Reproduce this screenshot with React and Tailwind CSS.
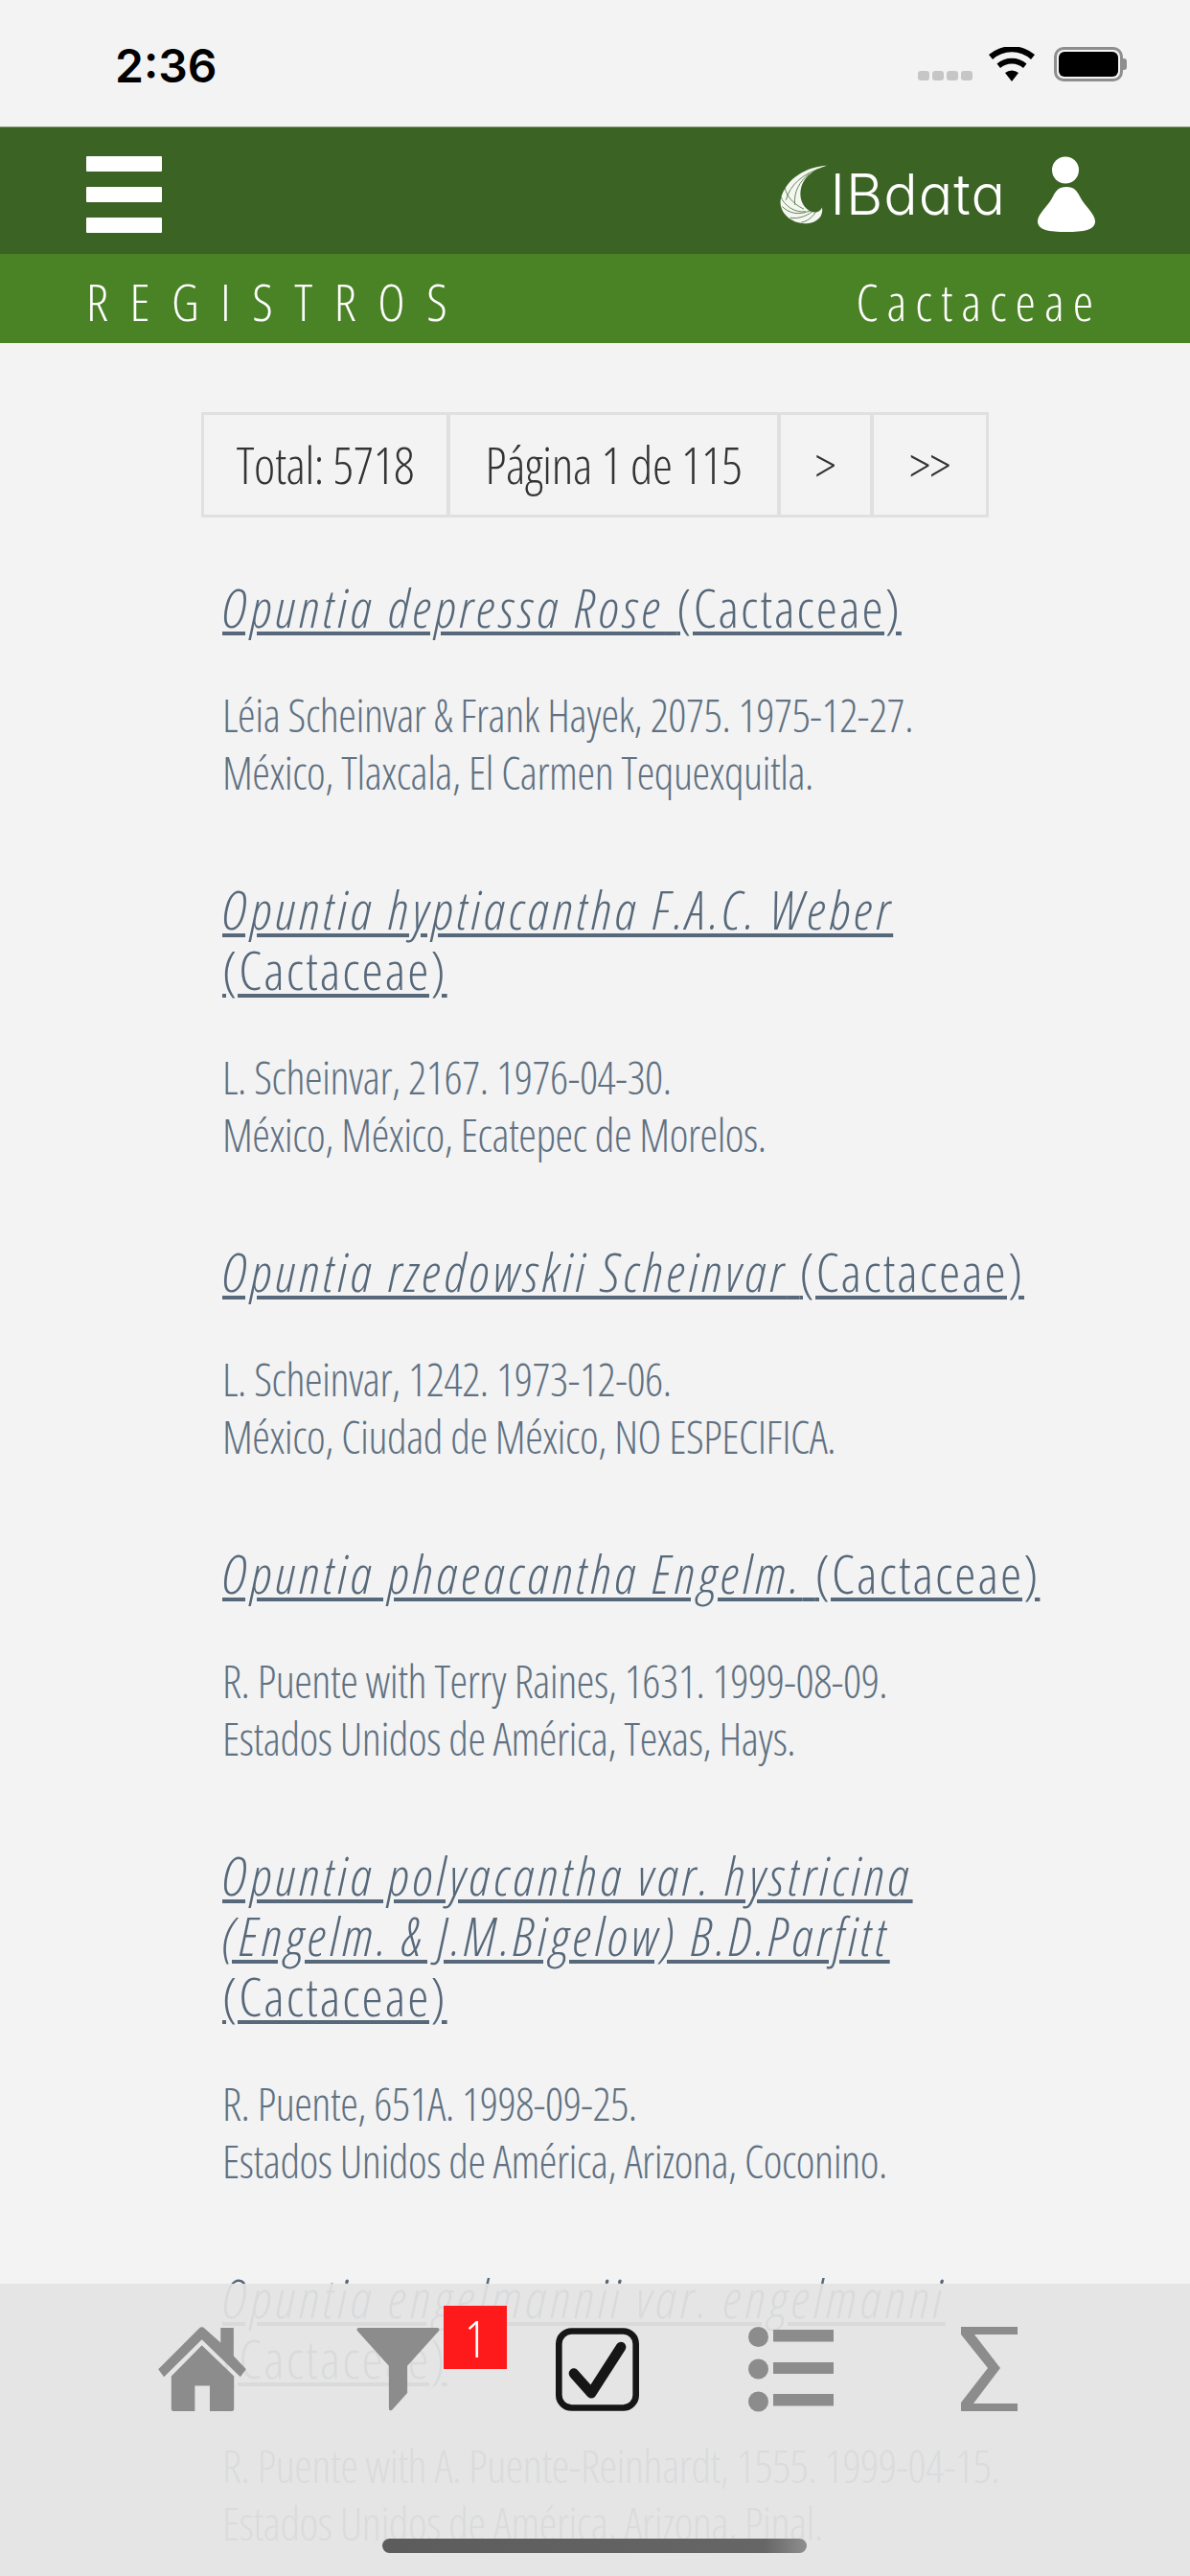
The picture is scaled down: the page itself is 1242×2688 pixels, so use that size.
const cond = "font-['Open_Sans',sans-serif] font-light [font-stretch:75%]";

const records = [
  {
    name: 'Opuntia depressa Rose',
    who: 'Léia Scheinvar & Frank Hayek, 2075. 1975-12-27.',
    where: 'México, Tlaxcala, El Carmen Tequexquitla.',
  },
  {
    name: 'Opuntia hyptiacantha F.A.C. Weber',
    who: 'L. Scheinvar, 2167. 1976-04-30.',
    where: 'México, México, Ecatepec de Morelos.',
  },
  {
    name: 'Opuntia rzedowskii Scheinvar',
    who: 'L. Scheinvar, 1242. 1973-12-06.',
    where: 'México, Ciudad de México, NO ESPECIFICA.',
  },
  {
    name: 'Opuntia phaeacantha Engelm.',
    who: 'R. Puente with Terry Raines, 1631. 1999-08-09.',
    where: 'Estados Unidos de América, Texas, Hays.',
  },
  {
    name: 'Opuntia polyacantha var. hystricina (Engelm. & J.M.Bigelow) B.D.Parfitt',
    who: 'R. Puente, 651A. 1998-09-25.',
    where: 'Estados Unidos de América, Arizona, Coconino.',
  },
  {
    name: 'Opuntia engelmannii var. engelmanni',
    who: 'R. Puente with A. Puente-Reinhardt, 1555. 1999-04-15.',
    where: 'Estados Unidos de América, Arizona, Pinal.',
  },
];

function StatusBar() {
  return (
    <div className="flex h-[132px] items-start justify-between bg-[#f3f3f3] pl-[120px] pr-[66px] pt-[40px]">
      <span className="font-['Inter',sans-serif] text-[48px] font-semibold leading-[58px] text-black">2:36</span>
      <div className="flex items-end gap-[17px] pt-[9px]">
        <div className="mb-[1px] flex gap-[3px]">
          <span className="h-[10px] w-[12px] rounded-[3px] bg-[#c6c6c6]" />
          <span className="h-[10px] w-[12px] rounded-[3px] bg-[#c6c6c6]" />
          <span className="h-[10px] w-[12px] rounded-[3px] bg-[#c6c6c6]" />
          <span className="h-[10px] w-[12px] rounded-[3px] bg-[#c6c6c6]" />
        </div>
        <svg width="48" height="36" viewBox="0 0 48 36">
          <path d="M24 36 17 27a11 11 0 0 1 14 0Z" fill="#000" />
          <path d="M12 22a18 18 0 0 1 24 0l3.500-4.500a24 24 0 0 0-31 0Z" fill="#000" />
          <path d="M4 13a30 30 0 0 1 40 0l4-5a37 37 0 0 0-48 0Z" fill="#000" />
        </svg>
        <div className="ml-[3px] flex items-center">
          <div className="flex h-[36px] w-[72px] items-center justify-center rounded-[10px] border-[3px] border-[#8e8e8e]">
            <div className="h-[26px] w-[62px] rounded-[6px] bg-black" />
          </div>
          <div className="h-[12px] w-[4px] rounded-r-[3px] bg-[#8e8e8e]" />
        </div>
      </div>
    </div>
  );
}

function LogoWing() {
  return (
    <svg width="50" height="62" viewBox="0 0 150 185">
      <path d="M150 2C90 5 20 40 5 110c-5 40 35 75 80 73 35-1 55-23 50-50-10 22-35 17-50 2C60 110 60 60 95 30 110 17 130 8 150 2Z" fill="#f4f7f2" />
      <g fill="none" stroke="#3b6323" strokeWidth="3" opacity="0.75">
        <path d="M125 12C75 30 35 60 22 110" />
        <path d="M95 28C65 50 45 85 50 125" />
        <path d="M18 60c-2 30 25 62 60 78" />
        <path d="M6 100c10 25 40 50 78 46" />
        <path d="M10 130c20 20 50 30 90 12" />
        <path d="M35 165c25 5 60-5 82-32" />
        <path d="M70 180c25-5 45-25 52-50" />
      </g>
    </svg>
  );
}

function Header() {
  return (
    <div className="flex h-[133px] items-center justify-between border-t border-[#7f9a72] bg-[#3b6323] pl-[90px] pr-[99px] pt-[7px]">
      <div className="flex w-[79px] flex-col gap-[16px]">
        <span className="h-[16px] rounded-[1px] bg-white" />
        <span className="h-[16px] rounded-[1px] bg-white" />
        <span className="h-[16px] rounded-[1px] bg-white" />
      </div>
      <div className="flex items-center">
        <LogoWing />
        <span className="ml-[4px] font-['Inter',sans-serif] text-[59px] font-light leading-[62px] tracking-[1px] text-white [font-feature-settings:'cv11']">
          IBdata
        </span>
        <svg className="ml-[33px]" width="60" height="79" viewBox="0 0 60 79" fill="#fff">
          <circle cx="29" cy="14.500" r="14" />
          <path d="M30 32c-8 0-11 4-14 10C11 52 0 60 0 68c0 9 12 11 30 11s30-2 30-11c0-8-11-16-16-26-3-6-6-10-14-10Z" />
        </svg>
      </div>
    </div>
  );
}

function SubHeader() {
  return (
    <div className={`flex h-[93px] items-center justify-between bg-[#4a8226] pl-[90px] pr-[92px] pt-[4px] text-white ${cond}`}>
      <span className="text-[54px] leading-[64px] tracking-[22.500px]">REGISTROS</span>
      <span className="text-[54px] leading-[64px] tracking-[9px]">Cactaceae</span>
    </div>
  );
}

function Pager() {
  const cell = 'flex h-full items-center justify-center border-[#e0e0e0]';
  return (
    <div className={`flex h-[110px] w-[822px] border-[3px] border-[#e0e0e0] text-[53px] tracking-[-0.4px] text-[#333] ${cond}`}>
      <div className={`${cell} w-[257px] border-r-[4px]`}>Total: 5718</div>
      <div className={`${cell} w-[345px] border-r-[4px]`}>Página 1 de 115</div>
      <div className={`${cell} w-[97px] border-r-[4px]`}>&gt;</div>
      <div className={`${cell} flex-1`}>&gt;&gt;</div>
    </div>
  );
}

function Record({ name, who, where }) {
  return (
    <div className={`flex flex-col gap-[51px] ${cond}`}>
      <a className="text-[56px] leading-[63px] tracking-[2px] text-[#56687a] underline decoration-[4px] underline-offset-[4px]">
        <i className="tracking-[3.800px]">{name} </i>(Cactaceae)
      </a>
      <p className="text-[47px] leading-[60px] tracking-[-0.450px] text-[#5f7182]">
        {who}
        <br />
        {where}
      </p>
    </div>
  );
}

function BottomBar() {
  return (
    <div className="absolute inset-x-0 bottom-0 h-[305px] bg-[#e3e3e3]/[.93]">
      <div className="flex items-start pl-[165px] pt-[45px]">
        <svg width="92" height="88" viewBox="0 0 276 265" fill="#8c8c8c">
          <path d="M0 133 128 5q9-8 18 0l50 45V3h41v89l39 41-18 24L137 40 18 157Z" />
          <path d="M137 58 238 155v103q0 7-7 7h-69v-80h-47v80H48q-7 0-7-7V155Z" />
        </svg>
        <div className="relative ml-[115px]">
          <svg className="mt-[1px]" width="87" height="87" viewBox="0 0 262 262" fill="#8c8c8c">
            <path d="M8 0H254q10 1 5 10L160 120v85l-48 53q-10 6-10-6V120L3 10Q-2 1 8 0Z" />
          </svg>
          <span className={`absolute left-[91px] top-[-22px] flex h-[66px] w-[66px] items-center justify-center bg-[#fe1a1a] text-[54px] text-white ${cond}`}>1</span>
        </div>
        <svg className="ml-[121px] mt-[1px]" width="87" height="87" viewBox="0 0 262 261" fill="none" stroke="#161616">
          <rect x="10" y="10" width="242" height="241" rx="40" strokeWidth="20" />
          <path d="M57 143l55 62 93-145" strokeWidth="32" strokeLinejoin="round" strokeLinecap="round" />
        </svg>
        <svg className="ml-[114px]" width="89" height="89" viewBox="0 0 89 89" fill="#8c8c8c">
          <circle cx="10.500" cy="10.500" r="10.500" />
          <rect x="26" y="3" width="63" height="12.500" />
          <circle cx="10.500" cy="44" r="10.500" />
          <rect x="26" y="37" width="63" height="12" />
          <circle cx="10.500" cy="78" r="10.500" />
          <rect x="26" y="70" width="63" height="12.500" />
        </svg>
        <svg className="ml-[133px]" width="59" height="88" viewBox="0 0 59 88" fill="#8c8c8c">
          <path d="M0 0H59V8H14L41 43 13 80H59v8H0V79L28 43 0 8Z" />
        </svg>
      </div>
      <div className="absolute bottom-[24px] left-[399px] h-[15px] w-[443px] rounded-full bg-linear-to-r from-[#5c5c5c] via-[#666666] via-90% to-[#8f8f8f]" />
    </div>
  );
}

export default function App() {
  return (
    <div className="relative h-[2688px] overflow-hidden bg-[#f3f3f3]">
      <StatusBar />
      <Header />
      <SubHeader />
      <div className="flex justify-center pt-[72px]">
        <Pager />
      </div>
      <div className="flex w-[1090px] flex-col gap-[81px] pl-[232px] pt-[62px]">
        {records.map((r) => (
          <Record key={r.name} {...r} />
        ))}
      </div>
      <BottomBar />
    </div>
  );
}
